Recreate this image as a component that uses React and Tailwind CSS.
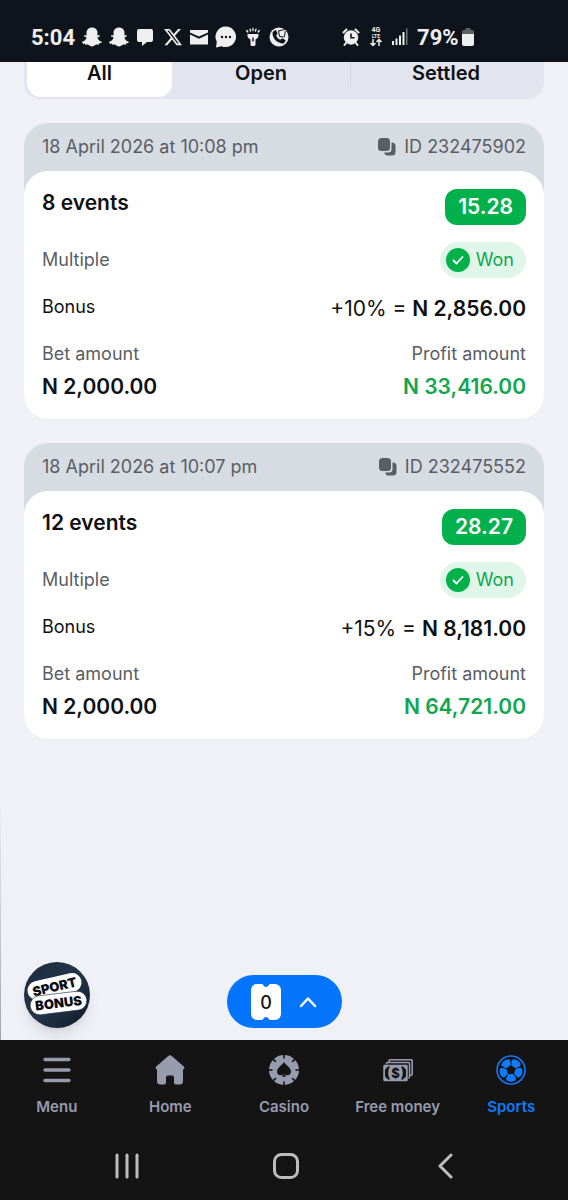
import { FaSnapchatGhost } from 'react-icons/fa';
import { FaXTwitter } from 'react-icons/fa6';

const tabs = [
  { name: 'All', style: 'flex-[145] rounded-b-[14px] bg-white' },
  { name: 'Open', style: 'flex-[179]' },
  { name: 'Settled', style: 'flex-[190]' },
];

const bets = [
  {
    id: '232475902',
    date: '18 April 2026 at 10:08 pm',
    events: '8 events',
    odds: '15.28',
    percent: '+10%',
    bonus: 'N 2,856.00',
    amount: 'N 2,000.00',
    profit: 'N 33,416.00',
  },
  {
    id: '232475552',
    date: '18 April 2026 at 10:07 pm',
    events: '12 events',
    odds: '28.27',
    percent: '+15%',
    bonus: 'N 8,181.00',
    amount: 'N 2,000.00',
    profit: 'N 64,721.00',
  },
];

/* Status bar icons */

function MessageIcon() {
  return (
    <svg viewBox="0 0 20 20" className="h-5 w-5" fill="currentColor">
      <path d="M3 2h12a2 2 0 0 1 2 2v9a2 2 0 0 1-2 2h-4l-5 4v-4H3a2 2 0 0 1-2-2V4a2 2 0 0 1 2-2z" />
    </svg>
  );
}

function MailIcon() {
  return (
    <svg viewBox="0 0 18 20" className="h-5 w-[18px]" fill="currentColor">
      <path d="M0 3h18v2.500L9 9.500 0 5.500z" />
      <path d="M0 7.500l9 4.200 9-4.200V17.500H0z" />
    </svg>
  );
}

function ChatIcon() {
  return (
    <svg viewBox="0 0 22 22" className="h-[22px] w-[22px]">
      <path fill="currentColor" d="M11 0.500a10.300 10.300 0 1 1-4.500 19.700L1 21.500l0.800-5.700A10.300 10.300 0 0 1 11 0.500z" />
      <g fill="#0f141c">
        <circle cx="7" cy="11" r="1.200" />
        <circle cx="11" cy="11" r="1.200" />
        <circle cx="15" cy="11" r="1.200" />
      </g>
    </svg>
  );
}

function TorchIcon() {
  return (
    <svg viewBox="0 0 18 20" className="h-5 w-[18px]" fill="currentColor">
      <path d="M3.500 7h11v2c0 1.500-1.500 2.500-3 3.500V17.500a1.500 1.500 0 0 1-1.500 1.500H8a1.500 1.500 0 0 1-1.500-1.500v-5c-1.500-1-3-2-3-3.500z" />
      <path d="M9 1.500v2M6 2.200l.6 1.800M12 2.200L11.400 4M2.800 3.500l1 1.500M15.200 3.500l-1 1.500" stroke="currentColor" strokeWidth="1.400" strokeLinecap="round" />
      <path d="M9 11v3" stroke="#0f141c" strokeWidth="1.400" strokeLinecap="round" />
    </svg>
  );
}

function CallIcon() {
  return (
    <svg viewBox="0 0 20 20" className="h-5 w-5">
      <circle cx="10" cy="10" r="9.500" fill="currentColor" />
      <path
        fill="#0f141c"
        d="M4.300 4.500l1.700-1.300c.5-.3 1 0 1.200.4l1.200 2.700c.2.500 0 .9-.3 1.200l-1 .9c.7 1.900 2.200 3.500 4.200 4.400l1.100-1.100c.3-.3.800-.4 1.200-.2l2.600 1.400c.4.300.5.700.3 1.100l-1.200 1.700c-1 1.100-2.600 1-4.200.4C6.700 14.500 4 11 3.500 6.800c-.1-.9.200-1.700.8-2.300z"
      />
      <path d="M9.500 4l6-1.500M10.500 9.500l5 .5M9.500 3.500l1 6M15.500 9.500l.8-5.500" fill="none" stroke="#0f141c" strokeWidth="1" />
    </svg>
  );
}

function AlarmIcon() {
  return (
    <svg viewBox="0 0 18 18" className="h-[18px] w-[18px]">
      <circle cx="9" cy="9.500" r="7.200" fill="currentColor" />
      <path d="M1.500 4.500L4.500 1.500M16.500 4.500L13.500 1.500M4 15l-1.500 2M14 15l1.500 2" stroke="currentColor" strokeWidth="2" strokeLinecap="round" />
      <path d="M9 5.500v4.300h3.500" fill="none" stroke="#0f141c" strokeWidth="1.600" />
    </svg>
  );
}

function LteIcon() {
  return (
    <svg viewBox="0 0 14 20" className="h-5 w-[14px] overflow-visible">
      <g fill="currentColor" fontFamily="Roboto, sans-serif" fontWeight="700" textAnchor="middle">
        <text x="7" y="5" fontSize="7">4G</text>
        <text x="7" y="11" fontSize="5">LTE</text>
      </g>
      <path d="M4 12v6.500M1.500 16L4 18.500 6.500 16M10 19v-6.500M7.500 15L10 12.500l2.500 2.500" fill="none" stroke="currentColor" strokeWidth="1.500" />
    </svg>
  );
}

function SignalIcon() {
  return (
    <svg viewBox="0 0 16 18" className="h-[18px] w-4" fill="currentColor">
      <rect x="0" y="13" width="2" height="4" />
      <rect x="3.500" y="10.500" width="2" height="6.500" />
      <rect x="7" y="7.500" width="2" height="9.500" />
      <rect x="10.500" y="4" width="2" height="13" />
      <rect x="14" y="0.500" width="1.500" height="16.500" opacity="0.450" />
    </svg>
  );
}

function BatteryIcon() {
  return (
    <svg viewBox="0 0 12 18" className="h-[18px] w-3">
      <path d="M3.500 0h5v2H10a2 2 0 0 1 2 2v2H0V4a2 2 0 0 1 2-2h1.500z" fill="#5d6066" />
      <path d="M0 6h12v10a2 2 0 0 1-2 2H2a2 2 0 0 1-2-2z" fill="currentColor" />
    </svg>
  );
}

/* Page icons */

function CopyIcon() {
  return (
    <svg viewBox="0 0 18 18" className="h-[18px] w-[18px]" fill="currentColor">
      <rect x="0" y="0" width="12" height="13" rx="3.500" />
      <path d="M13.500 4.500h.5a3.500 3.500 0 0 1 3.500 3.500v6a3.500 3.500 0 0 1-3.500 3.500H9.500A3.500 3.500 0 0 1 6.200 14.500H10a3.500 3.500 0 0 0 3.500-3.500z" />
    </svg>
  );
}

function CheckIcon() {
  return (
    <svg viewBox="0 0 24 24" className="h-6 w-6">
      <circle cx="12" cy="12" r="12" fill="#02b14c" />
      <path d="M7.500 12.500l3 3 6-6.500" fill="none" stroke="#fff" strokeWidth="1.800" strokeLinecap="round" strokeLinejoin="round" />
    </svg>
  );
}

function MenuIcon() {
  return (
    <svg viewBox="0 0 30 30" className="h-[30px] w-[30px]" fill="none" stroke="currentColor" strokeWidth="3.400" strokeLinecap="round">
      <path d="M3 4.500h24M3 15h24M3 25.500h24" />
    </svg>
  );
}

function HomeIcon() {
  return (
    <svg viewBox="0 0 30 30" className="h-[30px] w-[30px]" fill="currentColor">
      <path d="M13 1.200a3 3 0 0 1 4 0L28.800 11.500c1 1 .5 3-1 3H28V26a3.500 3.500 0 0 1-3.500 3.500h-3.700A1.800 1.800 0 0 1 19 27.700V22.500a2 2 0 0 0-2-2h-4a2 2 0 0 0-2 2v5.200a1.800 1.800 0 0 1-1.800 1.800H5.500A3.500 3.500 0 0 1 2 26V14.500h.2c-1.500 0-2-2-1-3z" />
    </svg>
  );
}

function CasinoIcon() {
  const notches = [0, 45, 90, 135, 180, 225, 270, 315];
  return (
    <svg viewBox="0 0 30 30" className="h-[30px] w-[30px]">
      <circle cx="15" cy="15" r="15" fill="currentColor" />
      {notches.map((angle) => (
        <rect key={angle} x="14.200" y="0" width="1.600" height="3.500" fill="#141414" transform={`rotate(${angle} 15 15)`} />
      ))}
      <path
        fill="#141414"
        d="M15 7c1.500 3 7 5.500 7 9.500 0 2.500-1.800 3.800-3.500 3.800-1.200 0-2.200-.5-2.800-1.300l1.300 2.800h-4l1.300-2.800c-.6.800-1.600 1.300-2.800 1.300C9.800 20.300 8 19 8 16.500 8 12.500 13.500 10 15 7z"
      />
    </svg>
  );
}

function MoneyIcon() {
  return (
    <svg viewBox="0 0 30 30" className="h-[30px] w-[30px]">
      <g fill="#141414" stroke="currentColor" strokeWidth="1.600">
        <rect x="6" y="4.800" width="23.200" height="15.500" rx="1" />
        <rect x="3.500" y="7.500" width="23" height="15.500" rx="1" />
      </g>
      <rect x="0" y="9.500" width="25" height="17" rx="1.500" fill="currentColor" stroke="#141414" strokeWidth="0.500" />
      <path d="M7 11.500c-2.400 4-2.400 9 0 13H5L2 21.500v-7l3-3zM18 11.500c2.400 4 2.400 9 0 13h2l3-3v-7l-3-3z" fill="#141414" />
      <text x="12.500" y="22.500" fontSize="13" fontWeight="800" textAnchor="middle" fill="#141414" fontFamily="Inter, sans-serif">$</text>
    </svg>
  );
}

function BallIcon() {
  const panels = [36, 108, 180, 252, 324];
  return (
    <svg viewBox="0 0 30 30" className="h-[30px] w-[30px]">
      <circle cx="15" cy="15" r="14" fill="none" stroke="currentColor" strokeWidth="1.600" />
      {panels.map((angle) => (
        <path
          key={angle}
          fill="currentColor"
          transform={`rotate(${angle} 15 15)`}
          d="M12 10.300L10.300 7.300c-.5-1-.3-2 .6-2.700 2.400-1.700 5.800-1.700 8.200 0 .9.700 1.100 1.700.6 2.700L18 10.300c-.3.400-.7.600-1.200.6h-3.600c-.5 0-.9-.2-1.200-.6z"
        />
      ))}
    </svg>
  );
}

function SportBonusLogo() {
  return (
    <svg viewBox="0 0 66 66" className="h-[66px] w-[66px]">
      <defs>
        <linearGradient id="logoFill" x1="0" y1="0" x2="1" y2="1">
          <stop offset="0" stopColor="#1c2839" />
          <stop offset="0.500" stopColor="#24364c" />
          <stop offset="1" stopColor="#0f1826" />
        </linearGradient>
      </defs>
      <circle cx="33" cy="33" r="33" fill="url(#logoFill)" />
      <g fontFamily="Inter, sans-serif" fontWeight="900" fontSize="13" textAnchor="middle">
        <g transform="rotate(-13 30.500 24.500)">
          <rect x="3" y="15" width="55" height="19" rx="9.500" fill="#fff" />
          <text x="30.500" y="29.500" fill="#0b0e14">SPORT</text>
        </g>
        <g transform="rotate(-7 34.500 41)">
          <rect x="6" y="31.500" width="57" height="19" rx="9.500" fill="#fff" stroke="#1c2839" strokeWidth="0.600" />
          <text x="34.500" y="45.800" fill="#0b0e14">BONUS</text>
        </g>
      </g>
    </svg>
  );
}

const menus = [
  { name: 'Menu', icon: <MenuIcon />, path: '#menu' },
  { name: 'Home', icon: <HomeIcon />, path: '#home' },
  { name: 'Casino', icon: <CasinoIcon />, path: '#casino' },
  { name: 'Free money', icon: <MoneyIcon />, path: '#free-money' },
  { name: 'Sports', icon: <BallIcon />, path: '#sports', active: true },
];

function StatusBar() {
  return (
    <div className="flex h-[62px] items-center bg-[#0f141c] pt-3 pl-[31px] font-[Roboto,sans-serif] text-[22px] font-bold text-[#eeeff0]">
      <span>5:04</span>
      <div className="ml-[7px] flex items-center gap-[7px]">
        <FaSnapchatGhost className="h-5 w-5" />
        <FaSnapchatGhost className="h-5 w-5" />
        <MessageIcon />
        <FaXTwitter className="h-5 w-5" />
        <MailIcon />
        <ChatIcon />
        <TorchIcon />
        <CallIcon />
      </div>
      <div className="ml-[53px] flex items-center gap-[9px]">
        <AlarmIcon />
        <LteIcon />
        <SignalIcon />
        <div className="flex items-center gap-[3px]">
          <span>79%</span>
          <BatteryIcon />
        </div>
      </div>
    </div>
  );
}

function BetCard({ bet }) {
  return (
    <article className="rounded-3xl bg-[#d7dbe2] text-lg">
      <header className="flex h-12 items-center justify-between px-[18px] text-[#5a5d64]">
        <time>{bet.date}</time>
        <button className="flex items-center gap-2">
          <CopyIcon />
          ID {bet.id}
        </button>
      </header>

      <div className="flex flex-col gap-[17px] rounded-3xl bg-white px-[18px] pt-[18px] pb-[13px] text-[#101114]">
        <div className="flex items-start justify-between">
          <h2 className="text-[21px] leading-7 font-semibold">{bet.events}</h2>
          <span className="flex h-9 items-center rounded-xl bg-[#02b14c] px-[13px] text-[21px] font-semibold text-white">{bet.odds}</span>
        </div>
        <div className="flex items-center justify-between">
          <span className="text-[#5a5d64]">Multiple</span>
          <span className="flex h-9 items-center gap-[6px] rounded-full bg-[#e0f6e8] pr-3 pl-[6px] text-[#12a651]">
            <CheckIcon />
            Won
          </span>
        </div>
        <div className="flex items-start justify-between">
          <span className="leading-6">Bonus</span>
          <span className="text-[21px] leading-7">
            {bet.percent} = <b className="font-semibold">{bet.bonus}</b>
          </span>
        </div>
        <dl className="flex justify-between">
          <div>
            <dt className="leading-7 text-[#5a5d64]">Bet amount</dt>
            <dd className="text-[21px] leading-[38px] font-semibold">{bet.amount}</dd>
          </div>
          <div className="text-right">
            <dt className="leading-7 text-[#5a5d64]">Profit amount</dt>
            <dd className="text-[21px] leading-[38px] font-semibold text-[#12a651]">{bet.profit}</dd>
          </div>
        </dl>
      </div>
    </article>
  );
}

export default function App() {
  return (
    <div className="flex min-h-screen flex-col bg-[#f0f1f6] font-[Inter,sans-serif]">
      <StatusBar />

      <main className="relative flex flex-1 flex-col px-6">
        {/* Drawer edge */}
        <div className="absolute bottom-0 left-0 h-60 w-px bg-linear-to-b from-transparent to-[#a3a4aa]" />

        {/* Tabs */}
        <div className="flex rounded-b-2xl bg-[#e2e5ed] px-[3px] pb-[2px] text-xl font-semibold text-[#101114]">
          {tabs.map((tab, index) => (
            <div key={tab.name} className={`flex ${tab.style}`}>
              <button className="h-[35px] flex-1 pb-[13px] leading-[22px]">{tab.name}</button>
              {index === 1 && <span className="h-[25px] w-px bg-[#d6d9e2]" />}
            </div>
          ))}
        </div>

        {/* Bets */}
        <div className="mt-6 flex flex-col gap-6">
          {bets.map((bet) => (
            <BetCard key={bet.id} bet={bet} />
          ))}
        </div>

        {/* Floating actions */}
        <div className="mt-auto grid grid-cols-[1fr_auto_1fr] items-end pb-3">
          <button aria-label="Sport bonus" className="justify-self-start rounded-full shadow-lg">
            <SportBonusLogo />
          </button>
          <button aria-label="Bet slip" className="flex h-[53px] w-[115px] items-center justify-center gap-[18px] rounded-full bg-[#0575fe]">
            <svg viewBox="0 0 30 36" className="h-9 w-[30px]">
              <path
                fill="#fff"
                d="M6 0h4.500a2 2 0 0 1 1.800 1.200 3 3 0 0 0 5.400 0A2 2 0 0 1 19.500 0H24a6 6 0 0 1 6 6v24a6 6 0 0 1-6 6h-4.500a2 2 0 0 1-1.800-1.200 3 3 0 0 0-5.400 0A2 2 0 0 1 10.500 36H6a6 6 0 0 1-6-6V6a6 6 0 0 1 6-6z"
              />
              <text x="15" y="24.500" fontSize="18" fontWeight="500" textAnchor="middle" fill="#101114">0</text>
            </svg>
            <svg viewBox="0 0 18 12" className="h-3 w-[18px]" fill="none" stroke="#fff" strokeWidth="2.500" strokeLinecap="round" strokeLinejoin="round">
              <path d="M2 10l7-7.500L16 10" />
            </svg>
          </button>
        </div>
      </main>

      {/* Bottom menu */}
      <nav className="grid h-[90px] grid-cols-5 bg-[#141414] pt-[15px]">
        {menus.map((menu) => (
          <a
            key={menu.name}
            href={menu.path}
            className={`flex flex-col items-center gap-3 text-[15px] font-semibold ${menu.active ? 'text-[#0f7bfb]' : 'text-[#989bae]'}`}
          >
            {menu.icon}
            <span className="leading-5">{menu.name}</span>
          </a>
        ))}
      </nav>

      {/* System buttons */}
      <div className="flex h-[70px] items-center justify-between bg-[#141414] px-[115px] pt-[2px] text-[#bdbdbd]">
        <button aria-label="Recents">
          <svg viewBox="0 0 24 26" className="h-[26px] w-6" fill="none" stroke="currentColor" strokeWidth="3" strokeLinecap="round">
            <path d="M2 2v22M12 2v22M22 2v22" />
          </svg>
        </button>
        <button aria-label="Home screen">
          <svg viewBox="0 0 26 26" className="h-[26px] w-[26px]" fill="none" stroke="currentColor" strokeWidth="3">
            <rect x="1.500" y="1.500" width="23" height="23" rx="7" />
          </svg>
        </button>
        <button aria-label="Back">
          <svg viewBox="0 0 20 26" className="h-[26px] w-5" fill="none" stroke="currentColor" strokeWidth="3" strokeLinecap="round" strokeLinejoin="round">
            <path d="M18 2L7 13l11 11" />
          </svg>
        </button>
      </div>
    </div>
  );
}
